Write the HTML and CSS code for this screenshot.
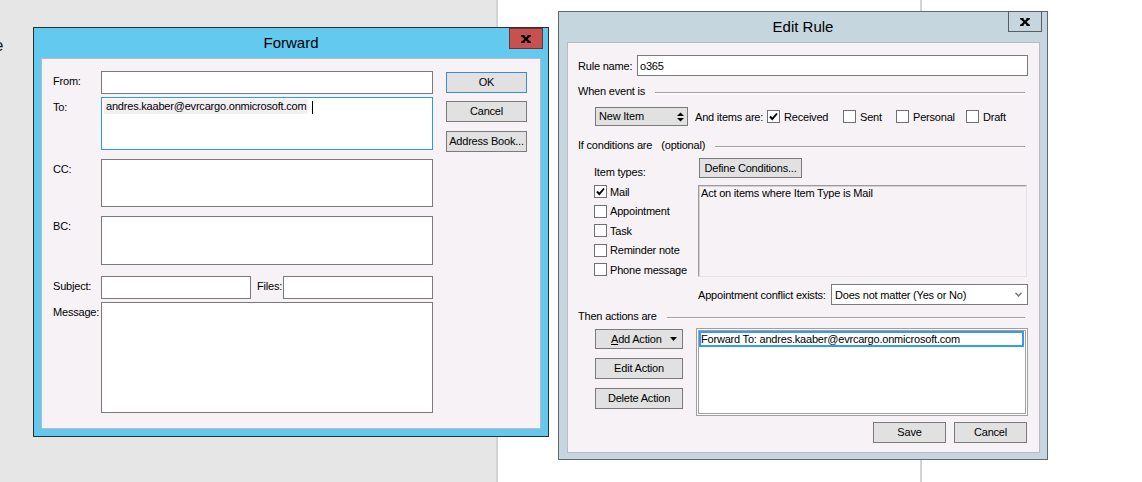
FILE: index.html
```html
<!DOCTYPE html>
<html lang="en">
<head>
<meta charset="utf-8">
<title>Forward / Edit Rule</title>
<link rel="stylesheet" href="styles.css">
</head>
<body>
<div class="desktop">
  <div class="backpanel"><span class="cut">e</span></div>
  <div class="midpanel"></div>

  <section class="win fwd">
    <header class="titlebar">
      <span></span>
      <span class="title">Forward</span>
      <span class="close close-red">
        <svg width="10" height="8" viewBox="0 0 10 8"><path d="M1.5 0.8 L8.5 7.2 M8.5 0.8 L1.5 7.2" stroke="#000" stroke-width="2.2" fill="none"/><path d="M0 0.7 H3.6 M6.4 0.7 H10 M0 7.3 H3.6 M6.4 7.3 H10" stroke="#000" stroke-width="1.4"/></svg>
      </span>
    </header>
    <div class="client fclient">
      <div class="fields">
        <div class="frow r-from"><span class="lbl">From:</span><div class="box"></div></div>
        <div class="frow r-to"><span class="lbl">To:</span><div class="box tobox"><span class="chip">andres.kaaber@evrcargo.onmicrosoft.com</span><span class="caret"></span></div></div>
        <div class="frow r-cc"><span class="lbl">CC:</span><div class="box"></div></div>
        <div class="frow r-bc"><span class="lbl">BC:</span><div class="box"></div></div>
        <div class="frow r-subj"><span class="lbl">Subject:</span><div class="box subj"></div><span class="lbl2">Files:</span><div class="box"></div></div>
        <div class="frow r-msg"><span class="lbl">Message:</span><div class="box"></div></div>
      </div>
      <div class="btncol">
        <div class="btn btn-default">OK</div>
        <div class="btn mt8">Cancel</div>
        <div class="btn mt9">Address Book...</div>
      </div>
    </div>
  </section>

  <section class="win rule">
    <header class="titlebar">
      <span></span>
      <span class="title">Edit Rule</span>
      <span class="close close-plain">
        <svg width="10" height="8" viewBox="0 0 10 8"><path d="M1.5 0.8 L8.5 7.2 M8.5 0.8 L1.5 7.2" stroke="#000" stroke-width="2.2" fill="none"/><path d="M0 0.7 H3.6 M6.4 0.7 H10 M0 7.3 H3.6 M6.4 7.3 H10" stroke="#000" stroke-width="1.4"/></svg>
      </span>
    </header>
    <div class="client rclient">
      <div class="namerow"><span class="namelbl">Rule name:</span><div class="box tb">o365</div></div>

      <div class="grp g1"><span>When event is</span><i class="gline"></i></div>
      <div class="eventrow">
        <div class="btn sel-new"><span>New Item</span>
          <svg width="7" height="10" viewBox="0 0 7 10"><polygon points="0,4 3.5,0.5 7,4" fill="#000"/><polygon points="0,6 7,6 3.5,9.5" fill="#000"/></svg>
        </div>
        <span class="andlbl">And items are:</span>
        <span class="chk w-rec"><span class="cb"><svg width="11" height="11" viewBox="0 0 11 11"><polyline points="2,5.5 4.3,8 9,2.5" fill="none" stroke="#000" stroke-width="1.9"/></svg></span><span class="cl">Received</span></span>
        <span class="chk w-sent"><span class="cb"></span><span class="cl">Sent</span></span>
        <span class="chk w-pers"><span class="cb"></span><span class="cl">Personal</span></span>
        <span class="chk"><span class="cb"></span><span class="cl">Draft</span></span>
      </div>

      <div class="grp g2"><span>If conditions are</span><span class="opt">(optional)</span><i class="gline"></i></div>
      <div class="cond">
        <span class="itemtypes">Item types:</span>
        <div class="btn defcond">Define Conditions...</div>
        <div class="typelist">
          <div class="trow"><span class="cb"><svg width="11" height="11" viewBox="0 0 11 11"><polyline points="2,5.5 4.3,8 9,2.5" fill="none" stroke="#000" stroke-width="1.9"/></svg></span><span class="tl">Mail</span></div>
          <div class="trow"><span class="cb"></span><span class="tl">Appointment</span></div>
          <div class="trow"><span class="cb"></span><span class="tl">Task</span></div>
          <div class="trow"><span class="cb"></span><span class="tl">Reminder note</span></div>
          <div class="trow"><span class="cb"></span><span class="tl">Phone message</span></div>
        </div>
        <div class="condbox">Act on items where Item Type is Mail</div>
        <div class="apptrow"><span class="apptlbl">Appointment conflict exists:</span>
          <div class="box dd"><span>Does not matter (Yes or No)</span>
            <svg width="7" height="5" viewBox="0 0 7 5"><polyline points="0.5,0.8 3.5,4 6.5,0.8" fill="none" stroke="#7a7a7a" stroke-width="1.5"/></svg>
          </div>
        </div>
      </div>

      <div class="grp g3"><span>Then actions are</span><i class="gline"></i></div>
      <div class="actions">
        <div class="actbtns">
          <div class="btn act-add"><span><u>A</u>dd Action</span>
            <svg class="tri" width="7" height="4" viewBox="0 0 7 4"><polygon points="0,0 7,0 3.5,4" fill="#000"/></svg>
          </div>
          <div class="btn act-edit">Edit Action</div>
          <div class="btn act-del">Delete Action</div>
        </div>
        <div class="actlist"><div class="actitem">Forward To: andres.kaaber@evrcargo.onmicrosoft.com</div></div>
      </div>

      <div class="footer">
        <div class="btn fbtn">Save</div>
        <div class="btn fbtn">Cancel</div>
      </div>
    </div>
  </section>
</div>
</body>
</html>
```

FILE: styles.css
```css
* { box-sizing: border-box; }
html, body { margin: 0; padding: 0; }
body {
  font-family: "Liberation Sans", Arial, sans-serif;
  font-size: 11px;
  letter-spacing: -0.2px;
  color: #000;
  background: #fff;
}

.desktop {
  position: relative;
  display: flex;
  width: 1142px;
  height: 482px;
  overflow: hidden;
  background: #fff;
}
.backpanel {
  flex: none;
  width: 498px;
  height: 482px;
  background: #e6e6e6;
  border-right: 2px solid #d3d3d3;
  padding-top: 36px;
  overflow: hidden;
}
.cut {
  display: block;
  margin-left: -6px;
  font-size: 17px;
  line-height: 20px;
  letter-spacing: 0;
  color: #1a1a1a;
}
.midpanel {
  flex: none;
  width: 424px;
  height: 482px;
  border-right: 2px solid #d3d3d3;
}

/* windows */
.win {
  position: absolute;
  display: flex;
  flex-direction: column;
}
.fwd {
  left: 33px;
  top: 27px;
  width: 516px;
  height: 410px;
  background: #63c9ef;
  border: 1px solid #2e2e2e;
}
.rule {
  left: 558px;
  top: 11px;
  width: 490px;
  height: 449px;
  background: #c5d6de;
  border: 1px solid #5f6a70;
}
.titlebar {
  flex: none;
  display: grid;
  grid-template-columns: 1fr auto 1fr;
  align-items: center;
  height: 30px;
}
.title {
  font-size: 15px;
  line-height: 18px;
  letter-spacing: 0;
  color: #000;
}
.close {
  justify-self: end;
  align-self: start;
  display: flex;
  align-items: center;
  justify-content: center;
}
.close-red {
  width: 34px;
  height: 21px;
  margin-right: 5px;
  background: #c75050;
  border: 1px solid #6b3434;
}
.close-plain {
  width: 34px;
  height: 21px;
  margin-right: 5px;
  margin-top: -1px;
  background: #c5d6de;
  border: 1px solid #555f65;
}
.client {
  flex: none;
  background: #f6f2f6;
  border: 1px solid #bdb9c2;
}

/* common controls */
.box {
  flex: 1;
  background: #fff;
  border: 1px solid #7a7a7a;
}
.btn {
  display: flex;
  align-items: center;
  justify-content: center;
  background: #e1e1e1;
  border: 1px solid #7a7a7a;
  line-height: 13px;
  white-space: nowrap;
}
.cb {
  flex: none;
  display: flex;
  align-items: center;
  justify-content: center;
  width: 13px;
  height: 13px;
  background: #fff;
  border: 1px solid #707070;
}

/* Forward dialog */
.fclient {
  height: 371px;
  margin: 0 7px;
  display: flex;
  padding: 12px 13px 0 11px;
}
.fields { width: 380px; flex: none; }
.frow { display: flex; align-items: flex-start; }
.lbl {
  width: 48px;
  flex: none;
  padding-top: 3px;
  line-height: 14px;
}
.r-from .box { height: 23px; }
.r-to { margin-top: 3px; }
.r-to .box { height: 53px; }
.tobox {
  border-color: #2a9be2;
  display: flex;
  align-items: flex-start;
  padding: 1px 0 0 2px;
}
.chip {
  background: #f3eff3;
  padding: 1px 2px;
  line-height: 13px;
  border-radius: 2px;
  white-space: nowrap;
}
.caret {
  width: 1px;
  height: 13px;
  background: #000;
  margin-left: 4px;
  margin-top: 2px;
}
.r-cc { margin-top: 9px; }
.r-cc .box { height: 48px; }
.r-bc { margin-top: 9px; }
.r-bc .box { height: 49px; }
.r-subj { margin-top: 11px; }
.r-subj .box { height: 23px; }
.subj { flex: none; width: 150px; }
.lbl2 {
  flex: none;
  width: 26px;
  margin-left: 6px;
  padding-top: 3px;
  line-height: 14px;
}
.r-msg { margin-top: 3px; }
.r-msg .box { height: 111px; }

.btncol {
  width: 81px;
  flex: none;
  margin-left: 13px;
  padding-top: 1px;
  display: flex;
  flex-direction: column;
}
.btncol .btn { height: 21px; }
.btn-default { border-color: #3c8ad6; }
.mt8 { margin-top: 8px; }
.mt9 { margin-top: 9px; }

/* Edit Rule dialog */
.rclient {
  height: 411px;
  margin: 0 7px 0 8px;
  padding: 12px 11px 0 10px;
}
.namerow { display: flex; height: 21px; align-items: stretch; }
.namelbl { width: 59px; flex: none; display: flex; align-items: center; }
.tb { display: flex; align-items: center; padding-left: 2px; }

.grp { display: flex; align-items: flex-start; line-height: 14px; white-space: nowrap; }
.gline {
  flex: 1;
  height: 2px;
  margin: 8px 3px 0 10px;
  border-top: 1px solid #a0a0a0;
  border-bottom: 1px solid #fff;
}
.g1 { margin-top: 8px; }
.g2 { margin-top: 12px; }
.g3 { margin-top: 4px; }
.opt { margin-left: 9px; }

.eventrow {
  display: flex;
  align-items: center;
  height: 19px;
  margin: 9px 0 0 17px;
}
.sel-new {
  width: 93px;
  height: 19px;
  justify-content: space-between;
  padding: 0 3px;
}
.andlbl { width: 72px; flex: none; margin-left: 7px; }
.chk { display: flex; align-items: center; flex: none; }
.cl { margin-left: 4px; }
.w-rec { width: 76px; }
.w-sent { width: 53px; }
.w-pers { width: 70px; }

.cond {
  display: grid;
  grid-template-columns: 104px 1fr;
  grid-template-rows: 20px 92px 21px;
  row-gap: 7px;
  margin: 6px 0 0 16px;
}
.itemtypes { grid-column: 1; grid-row: 1; padding-top: 7px; line-height: 14px; }
.defcond { grid-column: 2; grid-row: 1; width: 103px; margin-left: 1px; height: 20px; }
.typelist { grid-column: 1; grid-row: 2; margin-top: -3px; }
.trow { display: flex; align-items: center; height: 19.5px; }
.tl { margin-left: 3px; }
.condbox {
  grid-column: 2;
  grid-row: 2;
  margin-right: 1px;
  border: 1px solid;
  border-color: #9c9c9c #e4e4e4 #e4e4e4 #9c9c9c;
  box-shadow: inset 1px 1px 0 #d2d2d2;
  padding: 1px 2px;
  line-height: 13px;
}
.apptrow { grid-column: 2; grid-row: 3; display: flex; align-items: stretch; }
.apptlbl { width: 133px; flex: none; display: flex; align-items: center; }
.dd {
  display: flex;
  align-items: center;
  justify-content: space-between;
  padding: 0 5px 0 3px;
}

.actions {
  display: flex;
  height: 88px;
  margin: 5px 0 0 17px;
}
.actbtns { width: 88px; flex: none; display: flex; flex-direction: column; }
.act-add { margin-top: 1px; height: 20px; justify-content: flex-start; padding-left: 15px; }
.act-add u { text-decoration: underline; text-underline-offset: 1px; }
.tri { margin-left: 8px; }
.act-edit { margin-top: 9px; height: 21px; }
.act-del { margin-top: 9px; height: 21px; }
.actlist {
  flex: 1;
  margin-left: 13px;
  background: #fff;
  border: 1px solid #a0a0a0;
  box-shadow: inset 0 0 0 1px #fff, inset 0 0 0 2px #a0a0a0;
  padding: 2px 3px 2px 2px;
}
.actitem {
  height: 16px;
  border: 2px solid #3399ff;
  line-height: 12px;
  white-space: nowrap;
  overflow: hidden;
}

.footer {
  display: flex;
  justify-content: flex-end;
  gap: 8px;
  margin-top: 6px;
  padding-right: 1px;
}
.fbtn { width: 73px; height: 21px; }
```
